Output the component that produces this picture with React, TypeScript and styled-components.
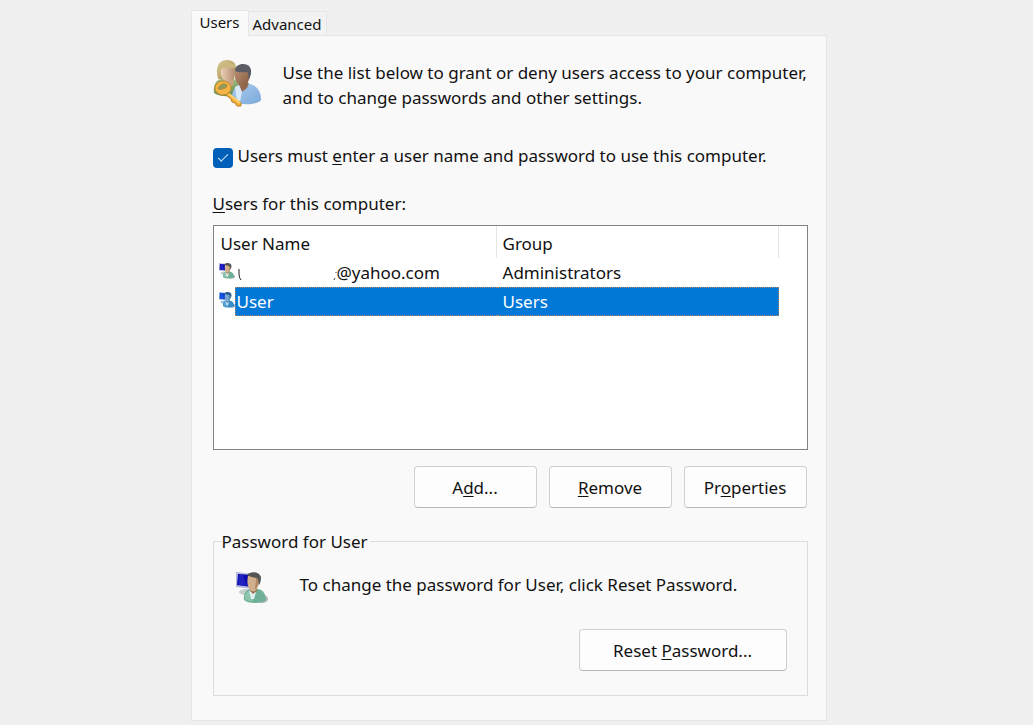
import React from 'react';
import styled, { createGlobalStyle } from 'styled-components';

const GlobalStyle = createGlobalStyle`
  *, *::before, *::after { box-sizing: border-box; }
  body {
    margin: 0;
    background: #f0f0f0;
    color: #111;
    font-family: "Noto Sans", "Open Sans", sans-serif;
    font-size: 17px;
    line-height: 25px;
  }
  u { text-decoration-thickness: 1px; text-underline-offset: 2px; }
`;

const Page = styled.main`
  display: flex;
  flex-direction: column;
  max-width: 652px;
  margin: 0 auto;
  padding: 10px 16px 4px 0;
`;

const TabList = styled.div`
  display: flex;
  align-items: flex-end;
`;

const Tab = styled.button<{ $active?: boolean }>`
  height: ${(p) => (p.$active ? 26 : 24)}px;
  margin: 0 0 ${(p) => (p.$active ? -1 : 0)}px;
  padding: 0 ${(p) => (p.$active ? 8 : 4)}px ${(p) => (p.$active ? 3 : 0)}px;
  border: 1px solid #e6e6e6;
  border-bottom: 0;
  border-left-width: ${(p) => (p.$active ? 1 : 0)}px;
  background: ${(p) => (p.$active ? '#f9f9f9' : '#f2f2f2')};
  color: inherit;
  font: 15px/22px "Noto Sans", "Open Sans", sans-serif;
  z-index: ${(p) => (p.$active ? 1 : 0)};
`;

const Panel = styled.section`
  display: flex;
  flex-direction: column;
  padding: 23px 18px 24px 21px;
  border: 1px solid #e5e5e5;
  background: #f9f9f9;
`;

const Intro = styled.div`
  display: flex;
  gap: 22px;
  p { margin: 1px 0 0; }
  svg { flex: none; }
`;

const CheckRow = styled.label`
  display: flex;
  align-items: flex-end;
  gap: 5px;
  margin-top: 33px;
`;

const CheckBox = styled.input`
  appearance: none;
  width: 20px;
  height: 20px;
  margin: 0;
  border-radius: 4px;
  background: #005fb8;
  display: grid;
  place-items: center;
  &:checked::after {
    content: "";
    width: 10px;
    height: 5px;
    margin-bottom: 3px;
    border: solid #cfe2f4;
    border-width: 0 0 1px 1px;
    transform: rotate(-45deg);
  }
`;

const ListLabel = styled.div`
  margin-top: 23px;
`;

const ListBox = styled.div`
  height: 225px;
  margin-top: 9px;
  padding-right: 28px;
  border: 1px solid #828282;
  background: #fff;
`;

const UserTable = styled.table`
  width: 100%;
  table-layout: fixed;
  border-collapse: separate;
  border-spacing: 0;
  line-height: 27px;
  th, td { padding: 0; text-align: left; font-weight: 400; }
`;

const IconCol = styled.col`
  width: 21px;
`;

const NameCol = styled.col`
  width: 262px;
`;

const HeadCell = styled.th`
  height: 32px;
  && { padding: 4px 6px 0; }
  &&:first-child { padding-left: 7px; }
  border-right: 1px solid #e5e5e5;
  line-height: 28px;
`;

const Row = styled.tr<{ $selected?: boolean }>`
  td:not(:first-child) {
    border: 1px dotted transparent;
    border-width: 1px 0;
    ${(p) => p.$selected && 'background: #0078d7; color: #fff; border-color: #b08468;'}
  }
  td:nth-child(2) { border-left-width: 1px; padding-left: 1px; }
  td:last-child { border-right-width: 1px; padding-left: 6px; }
  td:first-child { padding: 5px 0 0 5px; vertical-align: top; }
  svg { display: block; }
`;

const HiddenName = styled.svg`
  && { display: inline-block; vertical-align: middle; }
`;

const Actions = styled.div`
  display: flex;
  justify-content: flex-end;
  gap: 12px;
  margin-top: 16px;
  padding-right: 1px;
`;

const Button = styled.button<{ $wide?: boolean }>`
  width: ${(p) => (p.$wide ? 208 : 123)}px;
  height: 42px;
  padding: 0;
  border: 1px solid #d0d0d0;
  border-bottom-color: #b9b9b9;
  border-radius: 4px;
  background: #fdfdfd;
  color: inherit;
  font: inherit;
`;

const Group = styled.fieldset`
  min-width: 0;
  margin: 21px 0 0;
  padding: 18px 20px 24px 22px;
  border: 1px solid #dcdcdc;
  legend { margin-left: -14px; padding: 0 2px 0 0; }
`;

const GroupText = styled.div`
  display: flex;
  gap: 32px;
  p { margin: 0; }
  svg { flex: none; }
`;

const GroupActions = styled.div`
  display: flex;
  justify-content: flex-end;
  margin-top: 25px;
`;

const UsersIcon = () => (
  <svg width="48" height="48" viewBox="0 0 48 48" aria-hidden="true">
    <defs>
      <linearGradient id="hair" x1="0" y1="0" x2="1" y2="1">
        <stop offset="0" stopColor="#dccb94" /><stop offset="1" stopColor="#a08c54" />
      </linearGradient>
      <linearGradient id="skin" x1="0" y1="0" x2="1" y2="0">
        <stop offset="0" stopColor="#ead0b6" /><stop offset="1" stopColor="#b48d70" />
      </linearGradient>
      <linearGradient id="dark" x1="0" y1="0" x2="1" y2="1">
        <stop offset="0" stopColor="#bd9272" /><stop offset="1" stopColor="#83593f" />
      </linearGradient>
      <linearGradient id="blue" x1="0" y1="0" x2="1" y2="1">
        <stop offset="0" stopColor="#a9ccf0" /><stop offset="1" stopColor="#7ba9d8" />
      </linearGradient>
      <linearGradient id="green" x1="0" y1="0" x2="0" y2="1">
        <stop offset="0" stopColor="#a0bb80" /><stop offset="1" stopColor="#648f4c" />
      </linearGradient>
    </defs>
    <path d="M1 34c-1-8 2-13 7-14h13c5 2 7 6 7 13-4 5-20 6-27 1z" fill="url(#green)" />
    <path d="M10 19h10l1 6-5 4-6-5z" fill="#c8a382" />
    <path d="M5 20C2 9 5 1 14 1c5 0 8 2 9 7l-2 12z" fill="url(#hair)" />
    <path d="M8 9c4-1 9-2 13-1 2 6 0 11-3 14-2 1-5 1-7-1-3-3-4-7-3-12z" fill="url(#skin)" />
    <path d="M5 8c4-4 13-5 17-2l1 3c-6-1-12-1-17 2z" fill="#cbb87e" />
    <path d="M19 42c-1-9 3-15 9-17h9c7 2 11 7 11 16-4 5-20 6-29 1z" fill="url(#blue)" />
    <path d="M26 24h10l-2 5-5 4-3-7z" fill="#936a50" />
    <path d="M22 28l4-2 3 7-2 10h-3z" fill="#d9e8f7" />
    <path d="M22 11c3-2 10-2 14 0 1 7 0 12-3 15-2 2-5 2-7 0-4-4-5-9-4-15z" fill="url(#dark)" />
    <path d="M22 12c0-5 4-7 8-7 6 0 9 4 8 10l-2 6c-1-3 0-6-2-8-4 0-8 1-12-1z" fill="#5a5d64" />
    <path d="M14 33l14 11v3h-4l-2-3-3-1-1-3-5-4z" fill="#f0ad38" stroke="#bf8126" />
    <ellipse cx="10" cy="29" rx="8" ry="7" fill="#f3b546" stroke="#c48a30" />
    <path d="M5 30c1-4 6-7 9-4 1 3-5 5-9 4z" fill="#8f9b58" stroke="#b98a38" />
    <path d="M16 35l11 9" stroke="#ffd36e" strokeWidth="2" />
  </svg>
);

const UserIcon = ({ size, tinted }: { size: number; tinted?: boolean }) => (
  <svg width={size} height={size} viewBox="0 0 32 32" aria-hidden="true">
    <ellipse cx="10" cy="20" rx="7" ry="3" fill={tinted ? '#9fc3e2' : '#c6cccc'} />
    <ellipse cx="26" cy="27" rx="6" ry="4" fill={tinted ? '#7fa6c2' : '#b0b4b2'} />
    <path d="M0 0l17 2v15L0 15z" fill={tinted ? '#8db4ea' : '#b4b8dc'} />
    <path d="M2 2l14 1v12L1 13z" fill={tinted ? '#0d3cc8' : '#0a0aac'} />
    <path d="M3 3h4l4 11-9-1z" fill={tinted ? '#1456df' : '#2020c0'} />
    <path d="M8 28c-1-6 2-10 6-11h8c5 1 8 5 8 11-4 4-18 4-22 0z" fill={tinted ? '#3a8cc4' : '#6fb096'} />
    <path d="M9 27c-1-5 2-8 6-9l2 11c-3 0-6 0-8-2z" fill={tinted ? '#5ba4d8' : '#8cc5ae'} />
    <path d="M13 19l4 1 3 0-2 7h-3z" fill={tinted ? '#b8dcf4' : '#e2f0ef'} />
    <path d="M14 16h7v3l-4 3-3-3z" fill={tinted ? '#4b7fa8' : '#a07656'} />
    <path d="M12 4c4-2 9-1 11 2 1 6-1 10-4 13-2 1-4 0-5-1-3-4-3-9-2-14z" fill={tinted ? '#7ba8d0' : '#d2b08e'} />
    <path d="M20 6l3 1c0 5-2 9-4 11 0-4 1-8 1-12z" fill={tinted ? '#5583ac' : '#b08a68'} />
    <path d="M11 3c3-4 12-4 14 2 0 4-1 7-2 8l-1-6c-3-2-7-1-11-4z" fill={tinted ? '#2a5f92' : '#555553'} />
  </svg>
);

export default function App() {
  return (
    <>
      <GlobalStyle />
      <Page>
        <TabList role="tablist">
          <Tab role="tab" aria-selected="true" $active>Users</Tab>
          <Tab role="tab" aria-selected="false">Advanced</Tab>
        </TabList>
        <Panel role="tabpanel">
          <Intro>
            <UsersIcon />
            <p>
              Use the list below to grant or deny users access to your computer,
              and to change passwords and other settings.
            </p>
          </Intro>
          <CheckRow>
            <CheckBox type="checkbox" defaultChecked />
            <span>Users must <u>e</u>nter a user name and password to use this computer.</span>
          </CheckRow>
          <ListLabel id="users-label"><u>U</u>sers for this computer:</ListLabel>
          <ListBox>
            <UserTable aria-labelledby="users-label">
              <colgroup>
                <IconCol />
                <NameCol />
                <col />
              </colgroup>
              <thead>
                <tr>
                  <HeadCell colSpan={2}>User Name</HeadCell>
                  <HeadCell>Group</HeadCell>
                </tr>
              </thead>
              <tbody>
                <Row>
                  <td><UserIcon size={16} /></td>
                  <td>
                    <HiddenName width="100" height="16" viewBox="0 0 100 16" aria-hidden="true">
                      <path d="M2 3v5q0 4 2 6" fill="none" stroke="#222" />
                      <path d="M98 12l-1 2M99 6v1" fill="none" stroke="#444" />
                    </HiddenName>
                    @yahoo.com
                  </td>
                  <td>Administrators</td>
                </Row>
                <Row $selected>
                  <td><UserIcon size={16} tinted /></td>
                  <td>User</td>
                  <td>Users</td>
                </Row>
              </tbody>
            </UserTable>
          </ListBox>
          <Actions>
            <Button>A<u>d</u>d...</Button>
            <Button><u>R</u>emove</Button>
            <Button>Pr<u>o</u>perties</Button>
          </Actions>
          <Group>
            <legend>Password for User</legend>
            <GroupText>
              <UserIcon size={32} />
              <p>To change the password for User, click Reset Password.</p>
            </GroupText>
            <GroupActions>
              <Button $wide>Reset <u>P</u>assword...</Button>
            </GroupActions>
          </Group>
        </Panel>
      </Page>
    </>
  );
}
